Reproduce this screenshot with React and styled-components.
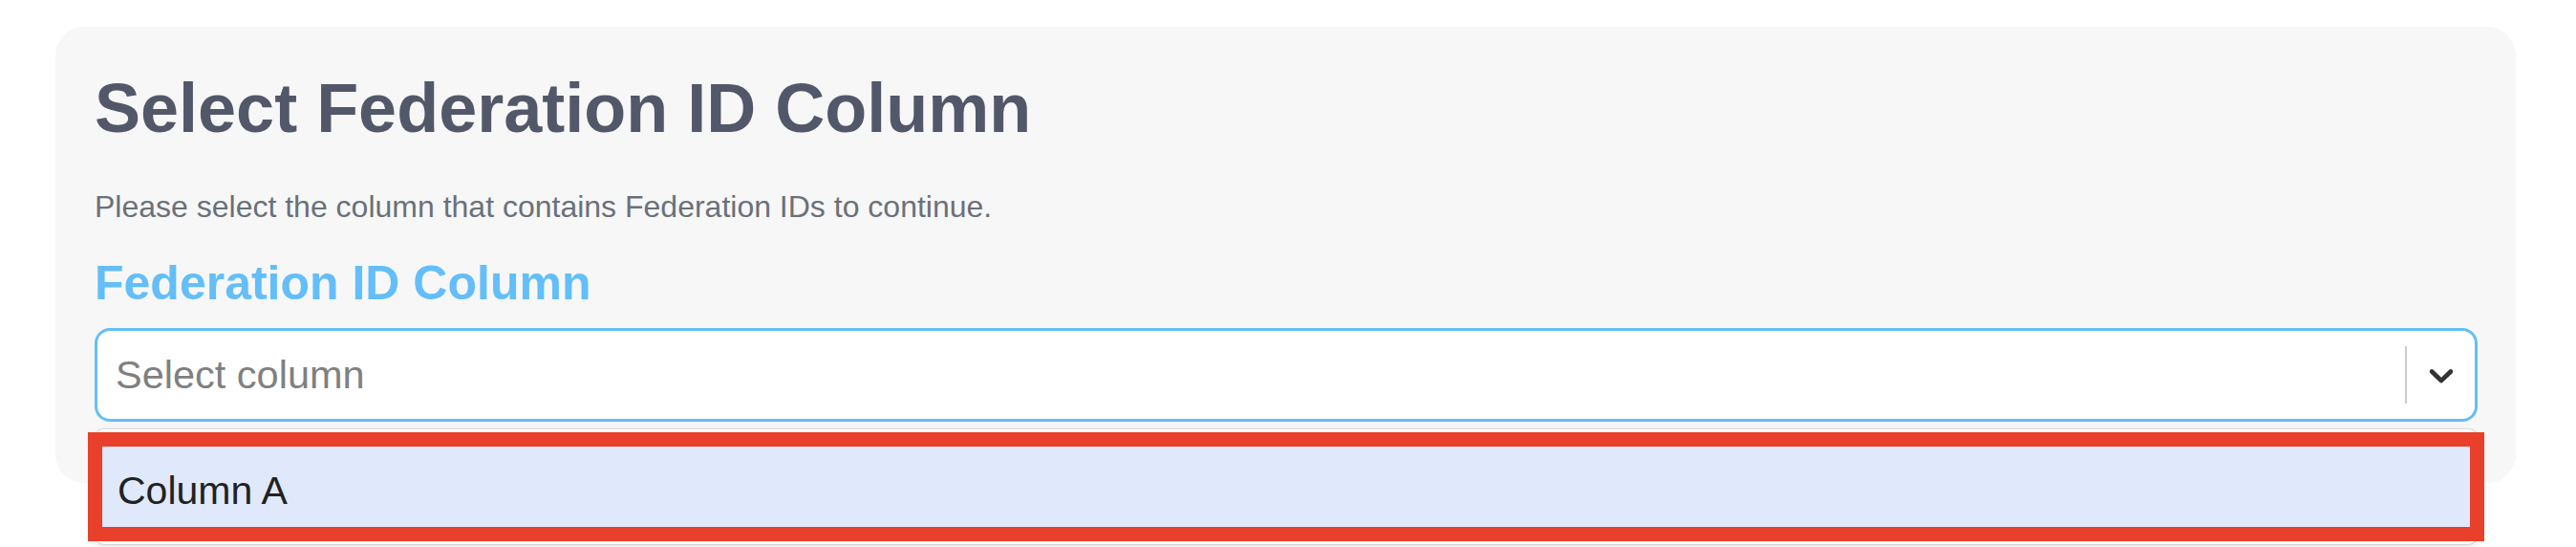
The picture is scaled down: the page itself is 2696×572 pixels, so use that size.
import React from "react";
import styled, { createGlobalStyle } from "styled-components";

const GlobalStyle = createGlobalStyle`
  body {
    margin: 0;
    background: #ffffff;
    font-family: "Liberation Sans", Arial, sans-serif;
  }
`;

const Page = styled.div`
  box-sizing: border-box;
  min-height: 572px;
  padding: 28px 63px 0 58px;
`;

const Card = styled.div`
  background: #f7f7f7;
  border-radius: 30px;
  padding: 42px 40px 64px 41px;
`;

const Title = styled.h1`
  margin: 0;
  font-size: 72px;
  line-height: 1.2;
  font-weight: 700;
  color: #525869;
`;

const Hint = styled.p`
  margin: 41px 0 0;
  font-size: 32px;
  line-height: 1.2;
  color: #6b7079;
`;

const Label = styled.div`
  margin-top: 30px;
  font-size: 50px;
  line-height: 1.2;
  font-weight: 700;
  color: #63bef9;
`;

const SelectWrap = styled.div`
  position: relative;
  margin-top: 17px;
`;

const Control = styled.div`
  height: 98px;
  box-sizing: border-box;
  display: flex;
  align-items: stretch;
  background: #ffffff;
  border: 3px solid #63bef9;
  border-radius: 16px;
`;

const Value = styled.div`
  flex: 1;
  display: flex;
  align-items: center;
  padding: 1px 0 0 19px;
  font-size: 41.5px;
  line-height: 1.2;
  color: #808080;
`;

const Indicators = styled.div`
  display: flex;
  align-items: center;
`;

const Separator = styled.span`
  width: 2px;
  height: 60px;
  background: #cccccc;
`;

const Chevron = styled.div`
  width: 71px;
  display: flex;
  justify-content: center;
  align-items: center;
  color: #333333;
`;

const Menu = styled.div`
  position: absolute;
  top: 100%;
  left: 0;
  right: 0;
  margin-top: 8px;
  padding: 10px 0;
  background: #ffffff;
  border-radius: 10px;
  box-shadow: 0 0 0 1px rgba(0, 0, 0, 0.1), 0 4px 11px rgba(0, 0, 0, 0.1);
`;

const Option = styled.div`
  height: 100px;
  box-sizing: border-box;
  padding: 30px 24px 0;
  font-size: 41px;
  line-height: 1.2;
  color: #222222;
  background: ${(p) => (p.$focused ? "#e0e9fb" : "#ffffff")};
  outline: ${(p) => (p.$focused ? "15px solid #e8402a" : "none")};
  outline-offset: -8px;
`;

const DownIcon = () => (
  <svg width="42" height="42" viewBox="0 0 20 20" fill="currentColor">
    <path d="M4.516 7.548c0.436-0.446 1.043-0.481 1.576 0l3.908 3.747 3.908-3.747c0.533-0.481 1.141-0.446 1.574 0 0.436 0.445 0.408 1.197 0 1.615-0.406 0.418-4.695 4.502-4.695 4.502-0.217 0.223-0.502 0.335-0.787 0.335s-0.57-0.112-0.789-0.335c0 0-4.287-4.084-4.695-4.502s-0.436-1.17 0-1.615z" />
  </svg>
);

const App = () => (
  <>
    <GlobalStyle />
    <Page>
      <Card>
        <Title>Select Federation ID Column</Title>
        <Hint>Please select the column that contains Federation IDs to continue.</Hint>
        <Label>Federation ID Column</Label>
        <SelectWrap>
          <Control>
            <Value>Select column</Value>
            <Indicators>
              <Separator />
              <Chevron>
                <DownIcon />
              </Chevron>
            </Indicators>
          </Control>
          <Menu>
            <Option $focused>Column A</Option>
          </Menu>
        </SelectWrap>
      </Card>
    </Page>
  </>
);

export default App;
